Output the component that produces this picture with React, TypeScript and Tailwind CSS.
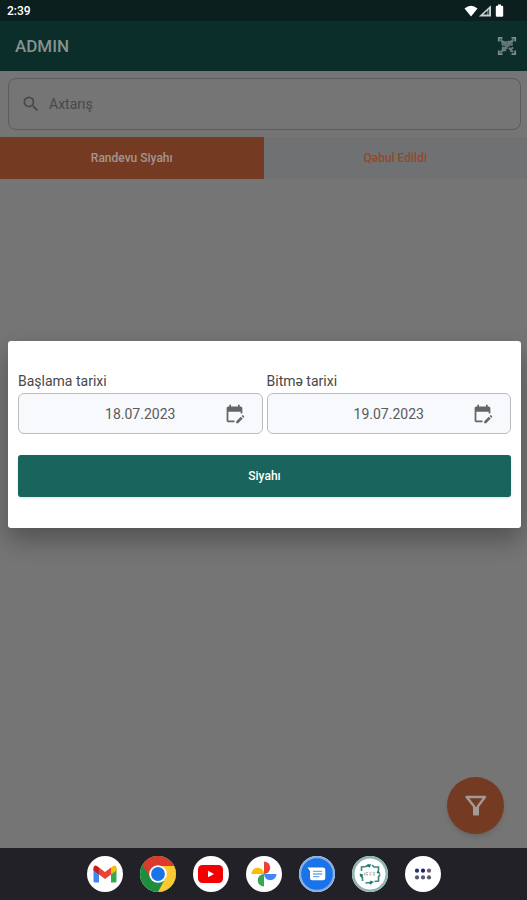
import React from "react";
import { MdEditCalendar, MdSearch } from "react-icons/md";

function StatusIcons() {
  return (
    <svg width="42" height="14" viewBox="0 0 42 14" fill="#fff" aria-hidden="true">
      <path d="M0.5 4.4 Q7 -0.8 13.5 4.4 L7 12.6 Z" />
      <path d="M27 1.2 V12.6 H14.8 Z" fill="#c9cfce" />
      <path d="M23.5 6.5 V10.6 H19.4 Z" fill="#0a1f1e" />
      <path d="M24.6 5.5 V10.6" stroke="#0a1f1e" strokeWidth="0.8" />
      <path d="M34 0.5 h3 v1.3 h1 q1.2 0 1.2 1.2 v8.6 q0 1.2 -1.2 1.2 h-5 q-1.2 0 -1.2 -1.2 v-8.6 q0 -1.2 1.2 -1.2 h1 Z" />
    </svg>
  );
}

function ScanIcon() {
  return (
    <svg width="20" height="20" viewBox="0 0 20 20" fill="none" stroke="#7d8f8d" aria-hidden="true">
      <path d="M1.8 5.5 V1.8 H5.5 M14.5 1.8 H18.2 V5.5 M18.2 14.5 V18.2 H14.5 M5.5 18.2 H1.8 V14.5" strokeWidth="1.8" />
      <g stroke="#6b7b79">
        <path d="M3.5 3.5 L8 8 M16.5 3.5 L12 8 M8 12 L3.5 16.5 M12 12 L16 16" strokeWidth="2.2" />
        <path d="M5 6 H8.5 V9 H5.5 Z M11.5 5.5 H15 V9 H11.5 Z M5.5 11.5 H8.5 V14.5 H5.5 Z" strokeWidth="1.4" />
        <path d="M8 10 H12 M10 5 V13 M12 12.5 H15 M13 15 H16 M15.5 11 V13" strokeWidth="1.5" />
      </g>
    </svg>
  );
}

function FunnelIcon() {
  return (
    <svg width="22" height="22" viewBox="0 0 22 22" fill="none" stroke="#a19a96" strokeWidth="2.4" strokeLinejoin="round" aria-hidden="true">
      <path d="M1.6 2 H20 L12.8 11.5 V19.4 H9.2 V11.5 Z" />
      <path d="M11 12 V19" strokeWidth="3" />
    </svg>
  );
}

function GmailIcon() {
  return (
    <svg width="24" height="18" viewBox="0 0 24 18" aria-hidden="true">
      <path d="M0.5 3 V16 q0 1.5 1.5 1.5 H6 V7 Z" fill="#4285f4" />
      <path d="M23.5 3 V16 q0 1.5 -1.5 1.5 H18 V7 Z" fill="#34a853" />
      <path d="M18 2.4 L20 0.9 Q23.5 -0.6 23.5 3 V5.4 L18 9.5 Z" fill="#fbbc04" />
      <path d="M6 2.4 L4 0.9 Q0.5 -0.6 0.5 3 V5.4 L6 9.5 Z" fill="#c5221f" />
      <path d="M6 2.4 L12 6.9 L18 2.4 V9.5 L12 14 L6 9.5 Z" fill="#ea4335" />
    </svg>
  );
}

function ChromeIcon() {
  return (
    <svg width="36" height="36" viewBox="0 0 36 36" aria-hidden="true">
      <circle cx="18" cy="18" r="18" fill="#1e8e3e" />
      <path d="M18 10 H34.1 A18 18 0 0 1 18 36 L25.5 22 Z" fill="#fcc934" />
      <path d="M18 10 H34.1 A18 18 0 0 0 2.4 9 L11 22 L18 18 Z" fill="#db3a2c" />
      <circle cx="18" cy="18" r="8.8" fill="#fff" />
      <circle cx="18" cy="18" r="6.9" fill="#1a73e8" />
    </svg>
  );
}

function VideoIcon() {
  return (
    <svg width="25" height="18" viewBox="0 0 25 18" aria-hidden="true">
      <rect width="25" height="18" rx="4.5" fill="#f40000" />
      <path d="M10 5.8 L16 9 L10 12.2 Z" fill="#fff" />
    </svg>
  );
}

function PhotosIcon() {
  return (
    <svg width="26" height="26" viewBox="0 0 26 26" aria-hidden="true">
      <path d="M13 13 V0.5 A6.2 6.2 0 0 1 13 13 Z" fill="#ea4335" />
      <path d="M13 13 H25.5 A6.2 6.2 0 0 1 13 13 Z" fill="#4285f4" />
      <path d="M13 13 V25.5 A6.2 6.2 0 0 1 13 13 Z" fill="#34a853" />
      <path d="M13 13 H0.5 A6.2 6.2 0 0 1 13 13 Z" fill="#fbbc04" />
    </svg>
  );
}

function MessagesIcon() {
  return (
    <svg width="36" height="36" viewBox="0 0 36 36" aria-hidden="true">
      <circle cx="18" cy="18" r="18" fill="#86aee6" />
      <circle cx="18" cy="18" r="15.8" fill="#1a73e8" />
      <path d="M8.5 11.5 H24 q2.3 0 2.3 2.3 V22 q0 2.3 -2.3 2.3 H13.3 q-2.3 0 -2.3 -2.3 V15 Z" fill="#fff" />
      <path d="M14 15.3 H23.3 M14 18 H23.3 M14 20.7 H20.5" stroke="#76a9f0" strokeWidth="1.3" />
    </svg>
  );
}

function ClinicIcon() {
  return (
    <svg width="36" height="36" viewBox="0 0 36 36" aria-hidden="true">
      <circle cx="18" cy="18" r="18" fill="#8db5ac" />
      <circle cx="18" cy="18" r="15.5" fill="#fff" />
      <g fill="none" stroke="#3c877d" strokeWidth="1.6">
        <path d="M9.5 15 V11 L14 10.5 L17 8.5" />
        <path d="M20 9 L22 11 H26.5 V14.5" />
        <path d="M28 18.5 L26.5 21 V25 L22.5 25.5" />
        <path d="M19.5 28 L17 26.5 L13.5 27" />
        <path d="M10.5 25 V21.5 L8 19" />
      </g>
      <path d="M14 10 l5 -2.3 l-1 3.8 Z M26 13.5 l2.5 4.5 l-3.8 -1 Z M22 26 l-4.5 2.3 l1 -3.8 Z M9.5 22 l-2 -4.5 l3.8 1 Z" fill="#17766a" />
      <path d="M12.8 16.5 V19.5 M14 16.8 h2 M14 18.8 h2 M17.5 16.8 h1.8 M17.5 18.8 h1.8 M20.8 16.8 h2.4 M20.8 18.8 h2.4" stroke="#8aa9a4" />
    </svg>
  );
}

function AppsIcon() {
  return (
    <svg width="18" height="12" viewBox="0 0 18 12" aria-hidden="true">
      <circle cx="3" cy="2.7" r="2.1" fill="#27306e" />
      <circle cx="9" cy="2.7" r="2.1" fill="#17207c" />
      <circle cx="15" cy="2.7" r="2.1" fill="#765870" />
      <circle cx="3" cy="9.4" r="2.1" fill="#57586b" />
      <circle cx="9" cy="9.4" r="2.1" fill="#57586b" />
      <circle cx="15" cy="9.4" r="2.1" fill="#57586b" />
    </svg>
  );
}

const apps = [
  { name: "Gmail", icon: <GmailIcon /> },
  { name: "Chrome", icon: <ChromeIcon /> },
  { name: "YouTube", icon: <VideoIcon /> },
  { name: "Photos", icon: <PhotosIcon /> },
  { name: "Messages", icon: <MessagesIcon /> },
  { name: "Clinic", icon: <ClinicIcon /> },
  { name: "All apps", icon: <AppsIcon /> },
];

function DateField({ id, label, value }: { id: string; label: string; value: string }) {
  return (
    <div className="min-w-0 flex-1">
      <label htmlFor={id} className="block h-5 text-sm leading-4 text-[#484848]">
        {label}
      </label>
      <div className="relative">
        <input
          id={id}
          type="text"
          defaultValue={value}
          className="block h-[41px] w-full rounded-md border border-[#bcbcbe] bg-[#f7f9fd] text-center text-sm text-[#5a5a5a] outline-none"
        />
        <button type="button" aria-label="Calendar" className="absolute inset-y-0 right-[18px] flex items-center text-[#666]">
          <MdEditCalendar size={21} />
        </button>
      </div>
    </div>
  );
}

export default function App() {
  return (
    <div className="relative flex min-h-screen flex-col bg-[#757575] font-[Roboto,sans-serif]">
      <div className="flex h-[21px] items-center justify-between bg-[#0a1f1e] pl-[7px] pr-[21px] text-white">
        <span className="text-xs font-medium">2:39</span>
        <StatusIcons />
      </div>
      <header className="flex h-[50px] items-center justify-between bg-[#0b2e2a] pl-[15px] pr-[10px]">
        <h1 className="pt-[2px] text-[17px] font-medium text-[#87928f]">ADMIN</h1>
        <button type="button" aria-label="Scan">
          <ScanIcon />
        </button>
      </header>

      <main className="relative flex flex-1 flex-col">
        <div className="py-[7px] pl-2 pr-[6px]">
          <label className="flex h-[52px] items-center gap-2 rounded-lg border border-[#5c5c5c] pl-3 text-[#484848]">
            <MdSearch size={20} />
            <input
              type="text"
              aria-label="Axtarış"
              placeholder="Axtarış"
              className="min-w-0 flex-1 bg-transparent text-sm outline-none placeholder:text-[#484848]"
            />
          </label>
        </div>
        <div className="flex h-[42px] text-xs font-medium">
          <button type="button" className="flex-1 bg-[#753b22] text-[#a39690]">
            Randevu Siyahı
          </button>
          <button type="button" className="flex-1 bg-[#6f7173] text-[#914a2b]">
            Qəbul Edildi
          </button>
        </div>
        <button
          type="button"
          aria-label="Filter"
          className="absolute bottom-[14px] right-[23px] flex size-[57px] items-center justify-center rounded-full bg-[#753b22] shadow-md"
        >
          <FunnelIcon />
        </button>
      </main>

      <nav className="flex h-[52px] items-center justify-center gap-[17px] bg-[#222127]">
        {apps.map((app) => (
          <button key={app.name} type="button" aria-label={app.name} className="flex size-9 items-center justify-center rounded-full bg-white">
            {app.icon}
          </button>
        ))}
      </nav>

      <div className="absolute inset-0 flex items-center pb-[31px] pl-2 pr-[6px]">
        <form
          role="dialog"
          aria-label="Siyahı"
          className="w-full rounded-[3px] bg-white px-[10px] pb-[31px] pt-8 shadow-[0_12px_24px_rgba(0,0,0,0.3)]"
          onSubmit={(e) => e.preventDefault()}
        >
          <div className="flex gap-1">
            <DateField id="start" label="Başlama tarixi" value="18.07.2023" />
            <DateField id="end" label="Bitmə tarixi" value="19.07.2023" />
          </div>
          <button type="submit" className="mt-[21px] block h-[42px] w-full rounded-[3px] bg-[#19655d] text-xs font-medium text-white shadow-sm">
            Siyahı
          </button>
        </form>
      </div>
    </div>
  );
}
